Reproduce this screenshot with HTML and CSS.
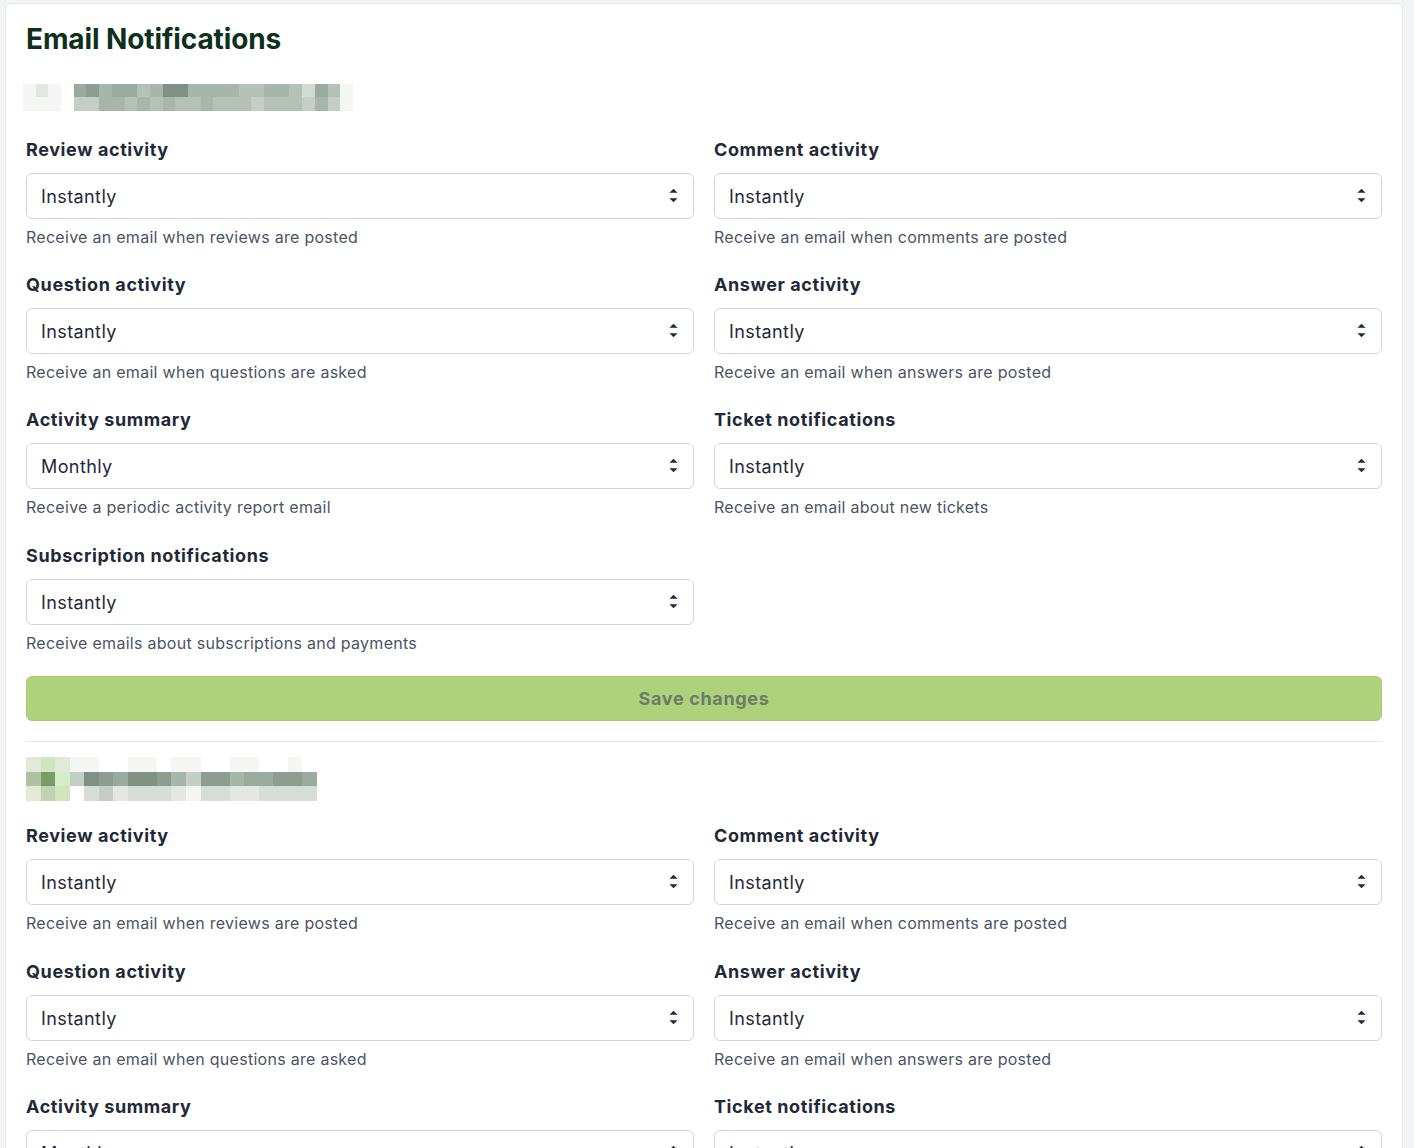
FILE: index.html
```html
<!DOCTYPE html>
<html lang="en">
<head>
<meta charset="utf-8">
<title>Email Notifications</title>
<link rel="stylesheet" href="styles.css">
</head>
<body>
<div class="card">
  <h1 class="title">Email Notifications</h1>

  <div class="mosaic mosaic-one">
    <div class="mrow"><span class="a"></span><span class="b"></span><span class="a"></span><span class="w"></span><span class="f"></span><span class="g"></span><span class="e"></span><span class="f"></span><span class="f"></span><span class="d"></span><span class="e"></span><span class="h"></span><span class="h"></span><span class="e"></span><span class="e"></span><span class="e"></span><span class="e"></span><span class="d"></span><span class="d"></span><span class="e"></span><span class="e"></span><span class="d"></span><span class="k"></span><span class="f"></span><span class="d"></span><span class="a"></span></div>
    <div class="mrow"><span class="a"></span><span class="a"></span><span class="a"></span><span class="w"></span><span class="c"></span><span class="c"></span><span class="e"></span><span class="e"></span><span class="d"></span><span class="e"></span><span class="d"></span><span class="e"></span><span class="d"></span><span class="d"></span><span class="e"></span><span class="d"></span><span class="d"></span><span class="d"></span><span class="c"></span><span class="d"></span><span class="d"></span><span class="d"></span><span class="c"></span><span class="e"></span><span class="c"></span><span class="a"></span></div>
  </div>

  <form class="settings">
    <div class="grid">
      <div class="field">
        <label class="label">Review activity</label>
        <div class="select-wrap">
          <select class="select"><option>Instantly</option><option>Daily</option><option>Weekly</option><option>Monthly</option><option>Never</option></select>
          <svg class="caret" viewBox="0 0 10 16" width="9" height="15" aria-hidden="true"><path d="M5 0.5 L9.5 5 H0.5 Z"/><path d="M0.5 11 H9.5 L5 15.5 Z"/></svg>
        </div>
        <p class="help">Receive an email when reviews are posted</p>
      </div>
      <div class="field">
        <label class="label">Comment activity</label>
        <div class="select-wrap">
          <select class="select"><option>Instantly</option><option>Daily</option><option>Weekly</option><option>Monthly</option><option>Never</option></select>
          <svg class="caret" viewBox="0 0 10 16" width="9" height="15" aria-hidden="true"><path d="M5 0.5 L9.5 5 H0.5 Z"/><path d="M0.5 11 H9.5 L5 15.5 Z"/></svg>
        </div>
        <p class="help">Receive an email when comments are posted</p>
      </div>
      <div class="field">
        <label class="label">Question activity</label>
        <div class="select-wrap">
          <select class="select"><option>Instantly</option><option>Daily</option><option>Weekly</option><option>Monthly</option><option>Never</option></select>
          <svg class="caret" viewBox="0 0 10 16" width="9" height="15" aria-hidden="true"><path d="M5 0.5 L9.5 5 H0.5 Z"/><path d="M0.5 11 H9.5 L5 15.5 Z"/></svg>
        </div>
        <p class="help">Receive an email when questions are asked</p>
      </div>
      <div class="field">
        <label class="label">Answer activity</label>
        <div class="select-wrap">
          <select class="select"><option>Instantly</option><option>Daily</option><option>Weekly</option><option>Monthly</option><option>Never</option></select>
          <svg class="caret" viewBox="0 0 10 16" width="9" height="15" aria-hidden="true"><path d="M5 0.5 L9.5 5 H0.5 Z"/><path d="M0.5 11 H9.5 L5 15.5 Z"/></svg>
        </div>
        <p class="help">Receive an email when answers are posted</p>
      </div>
      <div class="field">
        <label class="label">Activity summary</label>
        <div class="select-wrap">
          <select class="select"><option>Monthly</option><option>Weekly</option><option>Daily</option><option>Never</option></select>
          <svg class="caret" viewBox="0 0 10 16" width="9" height="15" aria-hidden="true"><path d="M5 0.5 L9.5 5 H0.5 Z"/><path d="M0.5 11 H9.5 L5 15.5 Z"/></svg>
        </div>
        <p class="help">Receive a periodic activity report email</p>
      </div>
      <div class="field">
        <label class="label">Ticket notifications</label>
        <div class="select-wrap">
          <select class="select"><option>Instantly</option><option>Daily</option><option>Weekly</option><option>Monthly</option><option>Never</option></select>
          <svg class="caret" viewBox="0 0 10 16" width="9" height="15" aria-hidden="true"><path d="M5 0.5 L9.5 5 H0.5 Z"/><path d="M0.5 11 H9.5 L5 15.5 Z"/></svg>
        </div>
        <p class="help">Receive an email about new tickets</p>
      </div>
      <div class="field">
        <label class="label">Subscription notifications</label>
        <div class="select-wrap">
          <select class="select"><option>Instantly</option><option>Daily</option><option>Weekly</option><option>Monthly</option><option>Never</option></select>
          <svg class="caret" viewBox="0 0 10 16" width="9" height="15" aria-hidden="true"><path d="M5 0.5 L9.5 5 H0.5 Z"/><path d="M0.5 11 H9.5 L5 15.5 Z"/></svg>
        </div>
        <p class="help">Receive emails about subscriptions and payments</p>
      </div>
    </div>
    <button type="button" class="save">Save changes</button>
  </form>

  <hr class="divider">

  <div class="mosaic mosaic-two">
    <div class="mrow"><span class="gl"></span><span class="gm"></span><span class="gl"></span><span class="a"></span><span class="a"></span><span class="w"></span><span class="w"></span><span class="a"></span><span class="a"></span><span class="w"></span><span class="a"></span><span class="a"></span><span class="w"></span><span class="w"></span><span class="a"></span><span class="a"></span><span class="w"></span><span class="w"></span><span class="a"></span><span class="w"></span></div>
    <div class="mrow"><span class="gx"></span><span class="gd"></span><span class="gp"></span><span class="c"></span><span class="h"></span><span class="g"></span><span class="f"></span><span class="h"></span><span class="h"></span><span class="g"></span><span class="e"></span><span class="c"></span><span class="g"></span><span class="g"></span><span class="e"></span><span class="f"></span><span class="f"></span><span class="g"></span><span class="g"></span><span class="f"></span></div>
    <div class="mrow"><span class="gl"></span><span class="gs"></span><span class="gm"></span><span class="w"></span><span class="l"></span><span class="c"></span><span class="b"></span><span class="l"></span><span class="l"></span><span class="l"></span><span class="b"></span><span class="a"></span><span class="l"></span><span class="l"></span><span class="b"></span><span class="b"></span><span class="l"></span><span class="l"></span><span class="l"></span><span class="l"></span></div>
  </div>

  <form class="settings">
    <div class="grid">
      <div class="field">
        <label class="label">Review activity</label>
        <div class="select-wrap">
          <select class="select"><option>Instantly</option><option>Daily</option><option>Weekly</option><option>Monthly</option><option>Never</option></select>
          <svg class="caret" viewBox="0 0 10 16" width="9" height="15" aria-hidden="true"><path d="M5 0.5 L9.5 5 H0.5 Z"/><path d="M0.5 11 H9.5 L5 15.5 Z"/></svg>
        </div>
        <p class="help">Receive an email when reviews are posted</p>
      </div>
      <div class="field">
        <label class="label">Comment activity</label>
        <div class="select-wrap">
          <select class="select"><option>Instantly</option><option>Daily</option><option>Weekly</option><option>Monthly</option><option>Never</option></select>
          <svg class="caret" viewBox="0 0 10 16" width="9" height="15" aria-hidden="true"><path d="M5 0.5 L9.5 5 H0.5 Z"/><path d="M0.5 11 H9.5 L5 15.5 Z"/></svg>
        </div>
        <p class="help">Receive an email when comments are posted</p>
      </div>
      <div class="field">
        <label class="label">Question activity</label>
        <div class="select-wrap">
          <select class="select"><option>Instantly</option><option>Daily</option><option>Weekly</option><option>Monthly</option><option>Never</option></select>
          <svg class="caret" viewBox="0 0 10 16" width="9" height="15" aria-hidden="true"><path d="M5 0.5 L9.5 5 H0.5 Z"/><path d="M0.5 11 H9.5 L5 15.5 Z"/></svg>
        </div>
        <p class="help">Receive an email when questions are asked</p>
      </div>
      <div class="field">
        <label class="label">Answer activity</label>
        <div class="select-wrap">
          <select class="select"><option>Instantly</option><option>Daily</option><option>Weekly</option><option>Monthly</option><option>Never</option></select>
          <svg class="caret" viewBox="0 0 10 16" width="9" height="15" aria-hidden="true"><path d="M5 0.5 L9.5 5 H0.5 Z"/><path d="M0.5 11 H9.5 L5 15.5 Z"/></svg>
        </div>
        <p class="help">Receive an email when answers are posted</p>
      </div>
      <div class="field">
        <label class="label">Activity summary</label>
        <div class="select-wrap">
          <select class="select"><option>Monthly</option><option>Weekly</option><option>Daily</option><option>Never</option></select>
          <svg class="caret" viewBox="0 0 10 16" width="9" height="15" aria-hidden="true"><path d="M5 0.5 L9.5 5 H0.5 Z"/><path d="M0.5 11 H9.5 L5 15.5 Z"/></svg>
        </div>
        <p class="help">Receive a periodic activity report email</p>
      </div>
      <div class="field">
        <label class="label">Ticket notifications</label>
        <div class="select-wrap">
          <select class="select"><option>Instantly</option><option>Daily</option><option>Weekly</option><option>Monthly</option><option>Never</option></select>
          <svg class="caret" viewBox="0 0 10 16" width="9" height="15" aria-hidden="true"><path d="M5 0.5 L9.5 5 H0.5 Z"/><path d="M0.5 11 H9.5 L5 15.5 Z"/></svg>
        </div>
        <p class="help">Receive an email about new tickets</p>
      </div>
      <div class="field">
        <label class="label">Subscription notifications</label>
        <div class="select-wrap">
          <select class="select"><option>Instantly</option><option>Daily</option><option>Weekly</option><option>Monthly</option><option>Never</option></select>
          <svg class="caret" viewBox="0 0 10 16" width="9" height="15" aria-hidden="true"><path d="M5 0.5 L9.5 5 H0.5 Z"/><path d="M0.5 11 H9.5 L5 15.5 Z"/></svg>
        </div>
        <p class="help">Receive emails about subscriptions and payments</p>
      </div>
    </div>
    <button type="button" class="save">Save changes</button>
  </form>
</div>
</body>
</html>
```

FILE: styles.css
```css
* { box-sizing: border-box; }

html, body {
  margin: 0;
  background: #f3f4f6;
}

body {
  padding: 3px 11px 0 5px;
  font-family: Inter, "Noto Sans", "Liberation Sans", sans-serif;
  color: #1f2937;
}

.card {
  background: #ffffff;
  border: 1px solid #e5e7eb;
  border-radius: 6px;
  padding: 17px 20px 24px 20px;
}

.title {
  margin: 0;
  font-size: 28px;
  line-height: 36px;
  font-weight: 700;
  color: #0e301c;
  letter-spacing: -0.1px;
}

.mosaic {
  display: flex;
  flex-direction: column;
}

.mosaic-one {
  margin: 27px 0 25px -3px;
}

.mosaic-one .mrow span {
  width: 12.7px;
  height: 13.3px;
}

.mosaic-two {
  margin: 15px 0 21px 0;
}

.mosaic-two .mrow span {
  width: 14.55px;
  height: 14.8px;
}

.mrow {
  display: flex;
}

.mrow span { display: block; flex: none; }

.mrow .w { background: transparent; }
.mrow .a { background: #f4f6f4; }
.mrow .b { background: #e2e7e3; }
.mrow .k { background: #d3d9d4; }
.mrow .l { background: #d6dcd8; }
.mrow .c { background: #c4cdc6; }
.mrow .d { background: #b5c0b7; }
.mrow .e { background: #a8b5ab; }
.mrow .f { background: #9aaa9e; }
.mrow .g { background: #8d9e91; }
.mrow .h { background: #7f9184; }
.mrow .gl { background: #e0ead7; }
.mrow .gm { background: #d0e5be; }
.mrow .gp { background: #d6ecc6; }
.mrow .gx { background: #b0c0a0; }
.mrow .gd { background: #7a9a68; }
.mrow .gs { background: #c2d2b2; }

.settings {
  margin: 0;
}

.grid {
  display: grid;
  grid-template-columns: 1fr 1fr;
  column-gap: 20px;
  row-gap: 22.4px;
}

.field {
  display: flex;
  flex-direction: column;
}

.label {
  font-size: 18px;
  line-height: 27px;
  font-weight: 700;
  color: #1f2937;
  letter-spacing: 0.6px;
  margin-bottom: 10px;
}

.select-wrap {
  position: relative;
}

.select {
  display: block;
  width: 100%;
  height: 46px;
  -webkit-appearance: none;
  appearance: none;
  background: #ffffff;
  border: 1px solid #d1d5db;
  border-radius: 6px;
  padding: 1px 40px 0 14px;
  font-family: inherit;
  font-size: 18px;
  letter-spacing: 0.4px;
  color: #1f2937;
  outline: none;
}

.caret {
  position: absolute;
  right: 16px;
  top: 15px;
  fill: #1f2937;
  pointer-events: none;
}

.help {
  margin: 6px 0 0 0;
  font-size: 16px;
  line-height: 24px;
  letter-spacing: 0.28px;
  color: #4b5563;
}

.save {
  display: block;
  width: 100%;
  height: 45px;
  margin-top: 21px;
  background: #aed27b;
  border: 1px solid #a5cb70;
  border-radius: 6px;
  font-family: inherit;
  font-size: 18px;
  font-weight: 700;
  letter-spacing: 0.65px;
  color: #6b7c67;
  cursor: default;
}

.divider {
  margin: 20px 0 0 0;
  border: 0;
  border-top: 1px solid #e5e7eb;
  height: 0;
}
```
